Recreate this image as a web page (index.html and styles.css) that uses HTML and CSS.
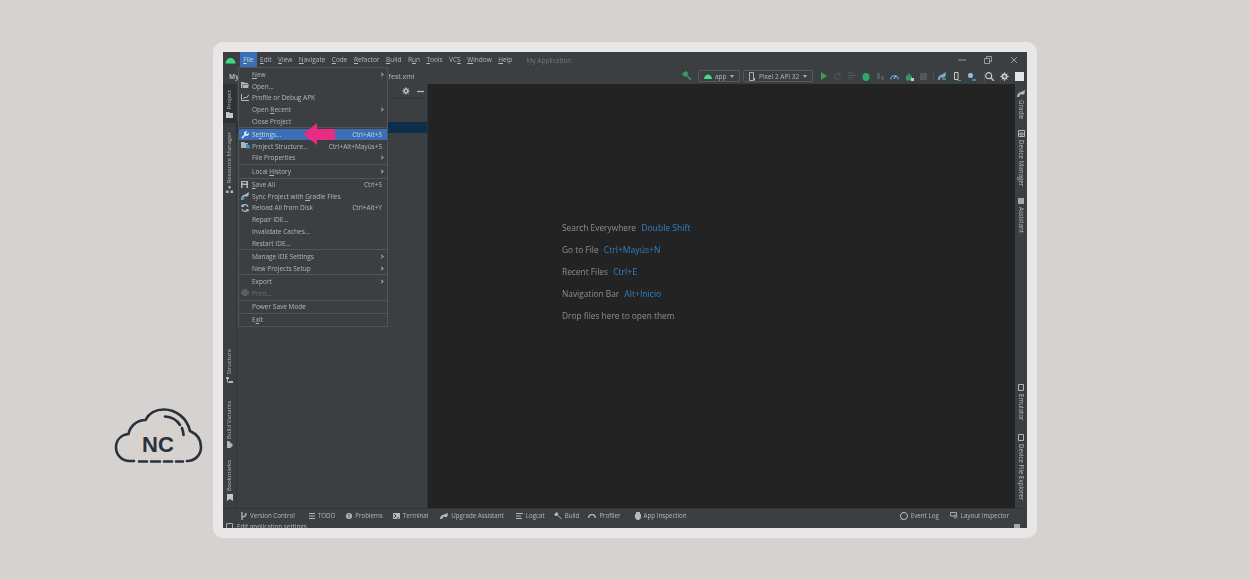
FILE: index.html
```html
<!DOCTYPE html>
<html lang="en">
<head>
    <meta charset="UTF-8">
    <meta name="viewport" content="width=device-width, initial-scale=1.0">
    <title>Android Studio settings</title>
    <link rel="stylesheet" href="styles.css">
</head>
<body>
    <div class="page">
        <div class="brand">
            <svg class="brand-logo" width="90" height="56" viewBox="113 408 90 56">
                <path class="cloud" d="M134 461H130C122 461 116 455 116 447.5C116 440 121 435 128.5 434C130 426 137 420 145.5 420C149 413 156 409.5 164 409.5C176 409.5 187 418 190 431C197 434 201 440 201 447C201 455 195 461 187 461"/>
                <path class="cloud" d="M139 461.500H147M151 461.500H160M164 461.500H172M176 461.500H183M165 416.500C172 417 177 420 180 425M182 428C183 431 183.500 433 183.500 435"/>
                <text class="brand-text" x="158" y="451.500" text-anchor="middle">NC</text>
            </svg>
        </div>

        <div class="frame">
            <div class="window">
                <div class="titlebar">
                    <svg class="app-logo" width="11" height="7" viewBox="0 0 11 7"><path d="M.5 6.500C.8 3 3 1 5.500 1S10.200 3 10.500 6.500Z" fill="#3ddc84"/></svg>
                    <nav class="menubar">
                        <span class="menubar-item active"><u>F</u>ile</span>
                        <span class="menubar-item"><u>E</u>dit</span>
                        <span class="menubar-item"><u>V</u>iew</span>
                        <span class="menubar-item"><u>N</u>avigate</span>
                        <span class="menubar-item"><u>C</u>ode</span>
                        <span class="menubar-item"><u>R</u>efactor</span>
                        <span class="menubar-item"><u>B</u>uild</span>
                        <span class="menubar-item">R<u>u</u>n</span>
                        <span class="menubar-item"><u>T</u>ools</span>
                        <span class="menubar-item">VC<u>S</u></span>
                        <span class="menubar-item"><u>W</u>indow</span>
                        <span class="menubar-item"><u>H</u>elp</span>
                    </nav>
                    <span class="app-name">My Application</span>
                    <div class="window-controls">
                        <svg width="8" height="8" viewBox="0 0 8 8"><path d="M0 4H8" stroke="#9a9d9f"/></svg>
                        <svg width="8" height="8" viewBox="0 0 8 8"><path d="M.5 2.500H5.500V7.500H.5ZM2.500 2.500V.5H7.500V5.500H5.500" fill="none" stroke="#9a9d9f"/></svg>
                        <svg width="8" height="8" viewBox="0 0 8 8"><path d="M1 1L7 7M7 1L1 7" stroke="#9a9d9f"/></svg>
                    </div>
                </div>

                <div class="toolbar">
                    <span class="crumb">My</span>
                    <span class="crumb-file">ifest.xml</span>
                    <div class="toolbar-actions">
                        <svg class="tool" width="10" height="10" viewBox="0 0 10 10"><path d="M1 3L4 .8L5.500 2.500L3 5ZM4 3.500L9 9" fill="#3f9d62" stroke="#3f9d62" stroke-width="1.300"/></svg>
                        <div class="combo combo-app">
                            <svg width="8" height="5" viewBox="0 0 8 5"><path d="M0 5C.2 2 2 .5 4 .5S7.800 2 8 5Z" fill="#3ddc84"/></svg>
                            <span>app</span><i class="caret"></i>
                        </div>
                        <div class="combo combo-device">
                            <svg width="7" height="9" viewBox="0 0 7 9"><path d="M.5.5H4.500V8.500H.5Z" fill="none" stroke="#9fb4c4"/><path d="M5.500 6V8.500" stroke="#9fb4c4"/></svg>
                            <span>Pixel 2 API 32</span><i class="caret"></i>
                        </div>
                        <svg class="tool" width="8" height="8" viewBox="0 0 8 8"><path d="M1 0L7 4L1 8Z" fill="#3c9a5f"/></svg>
                        <svg class="tool" width="8" height="8" viewBox="0 0 8 8"><path d="M6.500 3A3 3 0 1 0 6.500 6M5 .5V3H7.500" fill="none" stroke="#55595b"/></svg>
                        <svg class="tool" width="8" height="8" viewBox="0 0 8 8"><path d="M0 1H6M0 3.500H8M0 6H5" stroke="#55595b" stroke-width="1.200"/></svg>
                        <svg class="tool" width="8" height="9" viewBox="0 0 8 9"><ellipse cx="4" cy="5" rx="3.500" ry="4" fill="#2fa866"/></svg>
                        <svg class="tool" width="8" height="8" viewBox="0 0 8 8"><path d="M1 1H4V7H1ZM5 4H8V8H5Z" fill="#55595b"/></svg>
                        <svg class="tool" width="9" height="7" viewBox="0 0 9 7"><path d="M.8 6.500A3.700 3.700 0 0 1 8.200 6.500" fill="none" stroke="#4a9bc4" stroke-width="1.500"/><path d="M4 6L6 2.500" stroke="#c0c6ca"/></svg>
                        <svg class="tool" width="9" height="9" viewBox="0 0 9 9"><path d="M1 3.500H7V8.500H1Z" fill="#2f9d5f"/><path d="M2.500 3.500L4 .5L5.500 3.500" fill="#2f9d5f"/><path d="M6 6H9V9H6Z" fill="#c7cbce"/></svg>
                        <svg class="tool" width="7" height="7" viewBox="0 0 7 7"><path d="M0 0H7V7H0Z" fill="#55595b"/></svg>
                        <i class="tool-sep"></i>
                        <svg class="tool" width="10" height="8" viewBox="0 0 10 8"><path d="M1 8C1 4 3 3 5 2.500L9 0L8.500 4C7.500 6 5 6 4 5L2.500 8Z" fill="#8fa9ba"/><path d="M5 7H9" stroke="#3d9fd0" stroke-width="1.500"/></svg>
                        <svg class="tool" width="8" height="9" viewBox="0 0 8 9"><path d="M1.500.5H5V7.500H1.500Z" fill="none" stroke="#c7cbce"/><path d="M4 8.500H8" stroke="#2fa866" stroke-width="1.300"/></svg>
                        <svg class="tool" width="9" height="9" viewBox="0 0 9 9"><rect x="1" y="1" width="5" height="5" rx="2" fill="#9fb4c4"/><path d="M5 8H9" stroke="#3d9fd0" stroke-width="1.500"/></svg>
                        <i class="tool-sep tool-sep-end"></i>
                        <svg class="tool" width="9" height="9" viewBox="0 0 9 9"><circle cx="3.700" cy="3.700" r="3" fill="none" stroke="#c7cbce" stroke-width="1.200"/><path d="M6 6L9 9" stroke="#c7cbce" stroke-width="1.400"/></svg>
                        <svg class="tool" width="9" height="9" viewBox="0 0 9 9"><circle cx="4.500" cy="4.500" r="3" fill="#c7cbce"/><path d="M4.500 .2V8.800M.2 4.500H8.800M1.600 1.600L7.400 7.400M7.400 1.600L1.600 7.400" stroke="#c7cbce"/><circle cx="4.500" cy="4.500" r="1.200" fill="#3c3f41"/></svg>
                        <span class="avatar"></span>
                    </div>
                </div>

                <div class="workspace">
                    <aside class="strip strip-left">
                        <div class="side-tool current">
                            <span class="side-label">Project</span>
                            <svg width="7" height="6" viewBox="0 0 7 6"><path d="M0 0H3L4 1H7V6H0Z" fill="#c4c8ca"/></svg>
                        </div>
                        <div class="side-tool">
                            <span class="side-label">Resource Manager</span>
                            <svg width="7" height="7" viewBox="0 0 7 7"><path d="M2.500 0H4.500V2.500H2.500ZM0 4.500H2.500V7H0ZM4.500 4.500H7V7H4.500Z" fill="#b4b8ba"/></svg>
                        </div>
                        <div class="strip-bottom">
                            <div class="side-tool">
                                <span class="side-label">Structure</span>
                                <svg width="7" height="6" viewBox="0 0 7 6"><path d="M0 0H3V2H0ZM3 4H7V6H3ZM1 2H2V5H3V5.500H1Z" fill="#b4b8ba"/></svg>
                            </div>
                            <div class="side-tool side-tool-variants">
                                <span class="side-label">Build Variants</span>
                                <svg width="6" height="7" viewBox="0 0 6 7"><path d="M0 0H2L6 4L3.500 7H0Z" fill="#b4b8ba"/></svg>
                            </div>
                            <div class="side-tool">
                                <span class="side-label">Bookmarks</span>
                                <svg width="6" height="7" viewBox="0 0 6 7"><path d="M0 0H6V7L3 5L0 7Z" fill="#c4c8ca"/></svg>
                            </div>
                        </div>
                    </aside>

                    <section class="project-panel">
                        <div class="panel-head">
                            <svg width="8" height="8" viewBox="0 0 9 9"><circle cx="4.500" cy="4.500" r="3" fill="#b4b8ba"/><path d="M4.500 .2V8.800M.2 4.500H8.800M1.600 1.600L7.400 7.400M7.400 1.600L1.600 7.400" stroke="#b4b8ba"/><circle cx="4.500" cy="4.500" r="1.200" fill="#3c3f41"/></svg>
                            <svg width="7" height="7" viewBox="0 0 7 7"><path d="M0 3.500H7" stroke="#b4b8ba" stroke-width="1.300"/></svg>
                        </div>
                        <div class="panel-selected"></div>
                    </section>

                    <main class="editor">
                        <p class="hint">Search Everywhere <b>Double Shift</b></p>
                        <p class="hint">Go to File <b>Ctrl+Mayús+N</b></p>
                        <p class="hint">Recent Files <b>Ctrl+E</b></p>
                        <p class="hint">Navigation Bar <b>Alt+Inicio</b></p>
                        <p class="hint">Drop files here to open them</p>
                    </main>

                    <aside class="strip strip-right">
                        <div class="side-tool">
                            <svg width="8" height="7" viewBox="0 0 8 7"><path d="M0 7C0 4 2 2.500 4 2L8 0L7.500 3.500C6.500 5 4.500 5 3.500 4L2 7Z" fill="#b4b8ba"/></svg>
                            <span class="side-label">Gradle</span>
                        </div>
                        <div class="side-tool">
                            <svg width="7" height="7" viewBox="0 0 7 7"><path d="M.5.5H6.500V6.500H.5ZM2 3H5V5H2Z" fill="none" stroke="#b4b8ba"/></svg>
                            <span class="side-label">Device Manager</span>
                        </div>
                        <div class="side-tool">
                            <svg width="6" height="6" viewBox="0 0 6 6"><path d="M0 0H6V6H0Z" fill="#a4a8aa"/></svg>
                            <span class="side-label">Assistant</span>
                        </div>
                        <div class="strip-bottom">
                            <div class="side-tool">
                                <svg width="6" height="7" viewBox="0 0 6 7"><path d="M.5.5H5.500V6.500H.5Z" fill="none" stroke="#b4b8ba"/></svg>
                                <span class="side-label">Emulator</span>
                            </div>
                            <div class="side-tool">
                                <svg width="6" height="7" viewBox="0 0 6 7"><path d="M.5.5H5.500V6.500H.5Z" fill="none" stroke="#b4b8ba"/></svg>
                                <span class="side-label">Device File Explorer</span>
                            </div>
                        </div>
                    </aside>
                </div>

                <div class="toolwindows">
                    <span class="tw-item tw-vc"><svg width="6" height="8" viewBox="0 0 6 8"><path d="M1 0V8M1 5C4 5 5 4 5 1" fill="none" stroke="#b4b8ba" stroke-width="1.300"/></svg>Version Control</span>
                    <span class="tw-item tw-todo"><svg width="6" height="6" viewBox="0 0 6 6"><path d="M0 .5H6M0 3H6M0 5.500H6" stroke="#b4b8ba"/></svg>TODO</span>
                    <span class="tw-item tw-problems"><svg width="6" height="6" viewBox="0 0 6 6"><circle cx="3" cy="3" r="3" fill="#b4b8ba"/><path d="M3 1V3.500M3 4.300V5" stroke="#3c3f41"/></svg>Problems</span>
                    <span class="tw-item tw-terminal"><svg width="7" height="6" viewBox="0 0 7 6"><path d="M0 0H7V6H0Z" fill="#b4b8ba"/><path d="M1 1L3 3L1 5M4 5H6" fill="none" stroke="#3c3f41"/></svg>Terminal</span>
                    <span class="tw-item tw-upgrade"><svg width="8" height="6" viewBox="0 0 8 6"><path d="M0 6C0 3 2 2 4 1.500L8 0L7.500 3C6.500 4.500 4.500 4.500 3.500 3.500L2 6Z" fill="#b4b8ba"/></svg>Upgrade Assistant</span>
                    <span class="tw-item tw-logcat"><svg width="7" height="6" viewBox="0 0 7 6"><path d="M0 .5H7M0 3H5M0 5.500H6" stroke="#b4b8ba"/></svg>Logcat</span>
                    <span class="tw-item tw-build"><svg width="8" height="7" viewBox="0 0 8 7"><path d="M.5 2.500L3 .5L4 2L2 4ZM3 2.500L7.500 7" fill="#b4b8ba" stroke="#b4b8ba"/></svg>Build</span>
                    <span class="tw-item tw-profiler"><svg width="8" height="5" viewBox="0 0 8 5"><path d="M.7 5A3.300 3.300 0 0 1 7.300 5" fill="none" stroke="#b4b8ba" stroke-width="1.300"/></svg>Profiler</span>
                    <span class="tw-item tw-inspect"><svg width="6" height="8" viewBox="0 0 6 8"><path d="M1 0H5V2H6V6L4 8H2L0 6V2H1Z" fill="#b4b8ba"/></svg>App Inspection</span>
                    <span class="tw-item tw-event"><svg width="8" height="8" viewBox="0 0 8 8"><path d="M4 .5A3.500 3.500 0 1 1 1.500 6.500L.8 7.500" fill="none" stroke="#c4c8ca"/><path d="M4 .5A3.500 3.500 0 0 0 1.500 6.500" fill="none" stroke="#c4c8ca"/></svg>Event Log</span>
                    <span class="tw-item tw-layout"><svg width="8" height="7" viewBox="0 0 8 7"><path d="M.5.5H6.500V4H.5Z" fill="none" stroke="#a4a8aa"/><circle cx="5.500" cy="4.500" r="1.500" fill="none" stroke="#a4a8aa"/></svg>Layout Inspector</span>
                </div>

                <div class="statusbar">
                    <svg width="7" height="7" viewBox="0 0 7 7"><path d="M.5.5H6.500V6.500H.5Z" fill="none" stroke="#a4a8aa"/></svg>
                    <span>Edit application settings</span>
                    <svg class="status-end" width="6" height="6" viewBox="0 0 6 6"><path d="M0 0H6V6H0Z" fill="#a4a8aa"/></svg>
                </div>

                <div class="file-menu">
                    <div class="menu-row"><span class="menu-label"><u>N</u>ew</span><i class="chevron"></i></div>
                    <div class="menu-row"><svg class="menu-icon" width="8" height="6" viewBox="0 0 8 6"><path d="M0 0H3L4 1H7V2H2L1 6H0ZM2.500 2.500H8L7 6H1.500Z" fill="#a9b6c0"/></svg><span class="menu-label">Open...</span></div>
                    <div class="menu-row"><svg class="menu-icon" width="8" height="7" viewBox="0 0 8 7"><path d="M.5 0V6.500H8M2 5L4 3L5.500 4L8 .5" fill="none" stroke="#b4b8ba"/></svg><span class="menu-label">Profile or Debug APK</span></div>
                    <div class="menu-row"><span class="menu-label">Open <u>R</u>ecent</span><i class="chevron"></i></div>
                    <div class="menu-row"><span class="menu-label">Close Project</span></div>
                    <hr class="menu-sep">
                    <div class="menu-row selected"><svg class="menu-icon" width="8" height="8" viewBox="0 0 8 8"><path d="M.8 7.200L4 4" fill="none" stroke="#dfe6ee" stroke-width="1.600"/><path d="M7.600 1.600L6 3.200L4.800 2L6.400.4A2.300 2.300 0 0 0 3.200 3.400L4.600 4.800A2.300 2.300 0 0 0 7.600 1.600Z" fill="#dfe6ee"/></svg><span class="menu-label">Se<u>t</u>tings...</span><span class="menu-key">Ctrl+Alt+S</span></div>
                    <div class="menu-row"><svg class="menu-icon" width="9" height="7" viewBox="0 0 9 7"><path d="M0 0H3L4 1H7V2.500H5V6H0Z" fill="#a9b6c0"/><path d="M5 3H9V6.500H5Z" fill="#3d8fc4"/></svg><span class="menu-label">Project Structure...</span><span class="menu-key">Ctrl+Alt+Mayús+S</span></div>
                    <div class="menu-row"><span class="menu-label">File Properties</span><i class="chevron"></i></div>
                    <hr class="menu-sep">
                    <div class="menu-row"><span class="menu-label">Local <u>H</u>istory</span><i class="chevron"></i></div>
                    <hr class="menu-sep">
                    <div class="menu-row"><svg class="menu-icon" width="7" height="7" viewBox="0 0 7 7"><path d="M0 0H7V7H0Z" fill="#b4b8ba"/><path d="M1.500 1H5.500V2.500H1.500ZM1.500 4H5.500V7H1.500Z" fill="#3c3f41"/></svg><span class="menu-label"><u>S</u>ave All</span><span class="menu-key">Ctrl+S</span></div>
                    <div class="menu-row"><svg class="menu-icon" width="9" height="8" viewBox="0 0 9 8"><path d="M0 8C0 4 2 3 4 2.500L8 0L7.500 3.500C6.500 5 4.500 5 3.500 4L2 8Z" fill="#a9b6c0"/><circle cx="2" cy="6.500" r="1.500" fill="#3d8fc4"/></svg><span class="menu-label">Sync Project with <u>G</u>radle Files</span></div>
                    <div class="menu-row"><svg class="menu-icon" width="8" height="8" viewBox="0 0 8 8"><path d="M7 3A3 3 0 0 0 1.500 2M1 5A3 3 0 0 0 6.500 6M1 .5V2.500H3M7 7.500V5.500H5" fill="none" stroke="#b4bcc2" stroke-width="1.200"/></svg><span class="menu-label">Reload All from Disk</span><span class="menu-key">Ctrl+Alt+Y</span></div>
                    <div class="menu-row"><span class="menu-label">Repair IDE...</span></div>
                    <div class="menu-row"><span class="menu-label">Invalidate Caches...</span></div>
                    <div class="menu-row"><span class="menu-label">Restart IDE...</span></div>
                    <hr class="menu-sep">
                    <div class="menu-row"><span class="menu-label">Manage IDE Settings</span><i class="chevron"></i></div>
                    <div class="menu-row"><span class="menu-label">New Projects Setup</span><i class="chevron"></i></div>
                    <hr class="menu-sep">
                    <div class="menu-row"><span class="menu-label">Export</span><i class="chevron"></i></div>
                    <div class="menu-row disabled"><svg class="menu-icon" width="8" height="7" viewBox="0 0 8 7"><path d="M2 0H6V2H8V5.500H6V7H2V5.500H0V2H2Z" fill="#5a5e60"/></svg><span class="menu-label">Print...</span></div>
                    <hr class="menu-sep">
                    <div class="menu-row"><span class="menu-label">Power Save Mode</span></div>
                    <hr class="menu-sep">
                    <div class="menu-row"><span class="menu-label">E<u>x</u>it</span></div>

                    <svg class="menu-arrow" width="32" height="22" viewBox="0 0 32 22"><path d="M0 11L14 0V6H32V17H14V22Z" fill="#e72c85"/></svg>
                </div>
            </div>
        </div>
    </div>
</body>
</html>
```
FILE: styles.css
```css
html, body {
    margin: 0;
    padding: 0;
    height: 100%;
    overflow: hidden;
}
body {
    background-color: #d6d2d0;
    font-family: "Open Sans", "Noto Sans", sans-serif;
}
u {
    text-decoration-thickness: 0.5px;
    text-underline-offset: 1px;
}
.page {
    display: flex;
    width: 1250px;
    height: 580px;
}

/* logo on the left */
.brand {
    width: 213px;
    box-sizing: border-box;
    padding: 408px 0 0 113px;
}
.brand-logo {
    display: block;
}
.cloud {
    fill: none;
    stroke: #2a313b;
    stroke-width: 2.600;
    stroke-linecap: round;
}
.brand-text {
    font-family: "Liberation Sans", sans-serif;
    font-size: 22px;
    font-weight: bold;
    fill: #2a313b;
}

/* light card round the window */
.frame {
    width: 824px;
    height: 496px;
    margin-top: 42px;
    padding: 10px;
    box-sizing: border-box;
    background-color: #e8e6e6;
    border-radius: 10px;
}
.window {
    position: relative;
    width: 804px;
    height: 476px;
    overflow: hidden;
    display: flex;
    flex-direction: column;
    background-color: #3c3f41;
    color: #b4b8ba;
    font-size: 6.500px;
    filter: blur(0.35px);
}

/* title bar */
.titlebar {
    display: flex;
    align-items: center;
    height: 16px;
    flex: none;
    background-color: #3c3f41;
}
.app-logo {
    margin-left: 2px;
}
.menubar {
    display: flex;
    margin-left: 4px;
}
.menubar-item {
    padding: 0 3.250px;
    height: 16px;
    line-height: 16px;
}
.menubar-item.active {
    background-color: #3b6fb5;
    color: #cfd8e6;
}
.app-name {
    margin-left: 11px;
    color: #75797b;
}
.window-controls {
    display: flex;
    gap: 18px;
    margin-left: auto;
    margin-right: 9px;
}

/* main toolbar */
.toolbar {
    display: flex;
    align-items: center;
    height: 16px;
    flex: none;
    background-color: #3c3f41;
}
.crumb {
    margin-left: 6px;
    font-weight: bold;
}
.crumb-file {
    margin-left: 148px;
    font-size: 7px;
}
.toolbar-actions {
    display: flex;
    align-items: center;
    margin-left: auto;
    padding-right: 3px;
}
.tool {
    margin-right: 6px;
    flex: none;
}
.tool-sep {
    width: 1px;
    height: 11px;
    background-color: #4c5052;
    margin: 0 3px 0 0;
}
.tool-sep-end {
    margin: 0 0 0 2px;
}
.combo {
    display: flex;
    align-items: center;
    gap: 3px;
    height: 12px;
    padding: 0 5px;
    box-sizing: border-box;
    border: 1px solid #55595b;
    border-radius: 1px;
    margin-right: 3px;
}
.combo-app {
    width: 42px;
}
.combo-device {
    width: 70px;
    margin-right: 7px;
}
.caret {
    margin-left: auto;
    border-left: 2.500px solid transparent;
    border-right: 2.500px solid transparent;
    border-top: 3px solid #a9adb0;
}
.avatar {
    width: 9px;
    height: 9px;
    background-color: #e6e6e6;
}

/* side strips and centre */
.workspace {
    display: flex;
    height: 424px;
    flex: none;
}
.strip {
    display: flex;
    flex-direction: column;
    flex: none;
    background-color: #3c3f41;
}
.strip-left {
    width: 14px;
    border-right: 1px solid #323537;
    box-sizing: border-box;
}
.strip-right {
    width: 12px;
    padding-top: 6px;
    box-sizing: border-box;
}
.strip-bottom {
    margin-top: auto;
}
.side-tool {
    display: flex;
    flex-direction: column;
    align-items: center;
}
.strip-left .side-tool {
    gap: 2px;
    padding: 9px 0 4px;
}
.strip-left .strip-bottom {
    display: flex;
    flex-direction: column;
    gap: 4px;
    padding-bottom: 3.500px;
}
.strip-left .strip-bottom .side-tool {
    padding: 4px 0;
}
.strip-left .strip-bottom .side-tool-variants {
    padding-top: 10.500px;
}
.strip-left .side-tool.current {
    gap: 3px;
    padding: 6px 0 5px;
    background-color: #2f3133;
}
.strip-right .side-tool {
    gap: 3px;
    margin-bottom: 11px;
}
.strip-right .strip-bottom .side-tool {
    margin-bottom: 13px;
}
.strip-right .strip-bottom .side-tool:last-child {
    margin-bottom: 8px;
}
.side-label {
    writing-mode: vertical-rl;
    font-size: 5.900px;
    line-height: 1;
    white-space: nowrap;
}
.strip-right .side-label {
    font-size: 6.200px;
}
.strip-left .side-label {
    transform: rotate(180deg);
}
.project-panel {
    width: 191px;
    flex: none;
    background-color: #3b3f41;
    border-right: 1px solid #2f3133;
    box-sizing: border-box;
}
.panel-head {
    display: flex;
    align-items: center;
    justify-content: flex-end;
    gap: 7px;
    height: 14px;
    padding-right: 3px;
    border-bottom: 1px solid #333638;
}
.panel-selected {
    height: 11px;
    margin-top: 23px;
    background-color: #0d2f4b;
}
.editor {
    flex: 1;
    background-color: #232323;
    padding: 133px 0 0 134px;
}
.hint {
    margin: 0;
    height: 22px;
    line-height: 22px;
    font-size: 8.350px;
    color: #8b8f91;
}
.hint b {
    font-weight: normal;
    font-size: 8.600px;
    color: #2e80c4;
    margin-left: 3px;
}

/* bottom bars */
.toolwindows {
    display: flex;
    align-items: center;
    height: 14px;
    flex: none;
    font-size: 6.200px;
    border-top: 1px solid #333638;
    box-sizing: border-box;
}
.tw-item {
    display: flex;
    align-items: center;
    gap: 3px;
    white-space: nowrap;
}
.tw-vc { margin-left: 18px; }
.tw-todo { margin-left: 14px; }
.tw-problems { margin-left: 11px; }
.tw-terminal { margin-left: 10px; }
.tw-upgrade { margin-left: 12px; }
.tw-logcat { margin-left: 12px; }
.tw-build { margin-left: 9px; }
.tw-profiler { margin-left: 9px; }
.tw-inspect { margin-left: 14px; }
.tw-event { margin-left: auto; }
.tw-layout { margin-left: 11px; margin-right: 18px; }
.statusbar {
    display: flex;
    align-items: center;
    gap: 4px;
    height: 9px;
    flex: none;
    padding: 0 7px 0 3px;
    font-size: 6.300px;
}
.status-end {
    margin-left: auto;
}

/* file menu */
.file-menu {
    position: absolute;
    left: 15px;
    top: 15px;
    width: 150px;
    box-sizing: border-box;
    padding-top: 0.500px;
    background-color: #3c3f41;
    border: 1px solid #515557;
}
.menu-row {
    position: relative;
    display: flex;
    align-items: center;
    height: 11.700px;
    padding: 0 5px 0 13px;
}
.menu-row.selected {
    background-color: #3a6eb5;
    color: #c9d6e6;
}
.menu-row.disabled {
    color: #6b6f71;
}
.menu-icon {
    position: absolute;
    left: 2px;
    top: 2px;
}
.menu-key {
    margin-left: auto;
}
.chevron {
    margin-left: auto;
    margin-right: -1px;
    width: 3px;
    height: 3px;
    box-sizing: border-box;
    border-top: 1px solid #a9adb0;
    border-right: 1px solid #a9adb0;
    transform: rotate(45deg);
}
.menu-sep {
    margin: 0.500px 0;
    border: none;
    height: 0.700px;
    background-color: #515557;
}
.menu-arrow {
    position: absolute;
    left: 64px;
    top: 55px;
}
```
